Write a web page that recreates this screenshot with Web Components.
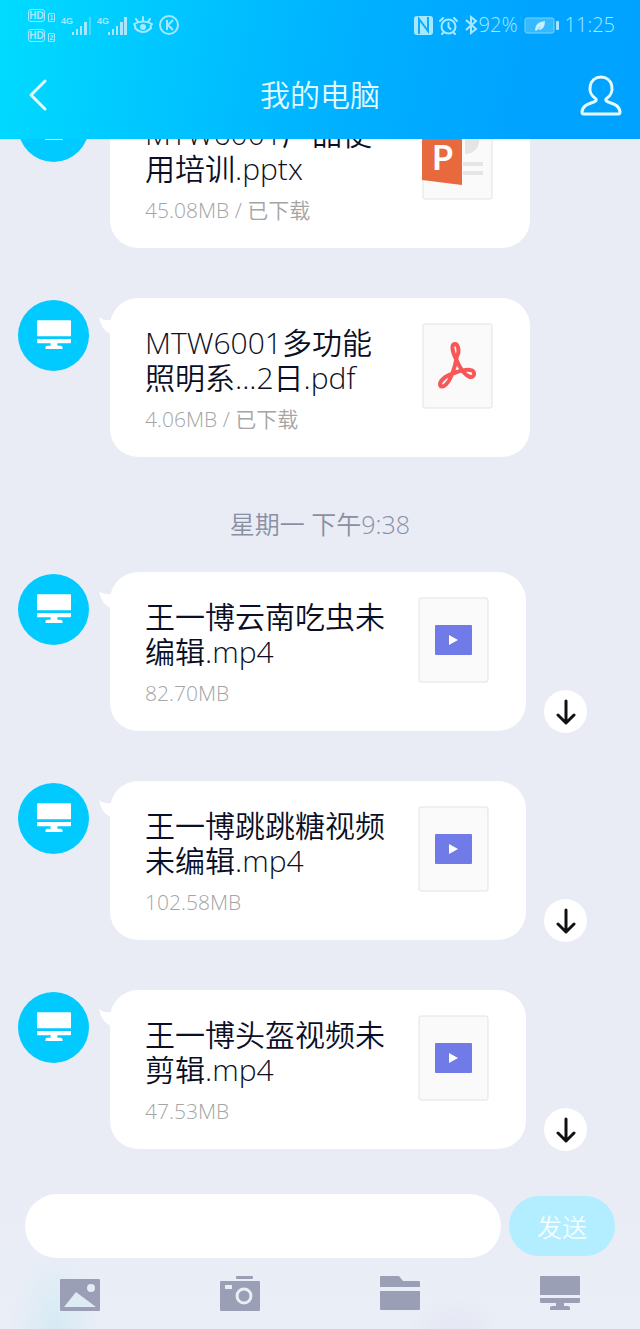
<!DOCTYPE html>
<html lang="zh-CN">
<head>
<meta charset="utf-8">
<meta name="viewport" content="width=device-width, initial-scale=1">
<title>我的电脑</title>
<style>
html, body { height: 100%; }
body {
  margin: 0;
  background: #e9ecf5;
  color: #0b0f26;
  font-family: "Open Sans", "Noto Sans CJK SC", sans-serif;
  font-weight: 350;
}
</style>
</head>
<body>
<chat-app>
  <status-bar slot="top" battery="92%" clock="11:25"></status-bar>
  <title-bar slot="top">我的电脑</title-bar>

  <file-message kind="ppt" size="45.08MB" state="已下载">MTW6001产品使用培训.pptx</file-message>
  <file-message kind="pdf" size="4.06MB" state="已下载">MTW6001多功能照明系...2日.pdf</file-message>
  <time-stamp>星期一 下午9:38</time-stamp>
  <file-message kind="video" size="82.70MB">王一博云南吃虫未编辑.mp4</file-message>
  <file-message kind="video" size="102.58MB">王一博跳跳糖视频未编辑.mp4</file-message>
  <file-message kind="video" size="47.53MB">王一博头盔视频未剪辑.mp4</file-message>

  <message-composer slot="bottom"></message-composer>
  <tool-bar slot="bottom"></tool-bar>
</chat-app>

<script>
function define(name, render) {
  customElements.define(name, class extends HTMLElement {
    constructor() {
      super();
      this.attachShadow({ mode: 'open' }).innerHTML = render(this);
    }
  });
}

define('chat-app', () => `
  <style>
    :host { display: flex; flex-direction: column; height: 100vh; }
    header {
      flex: none; color: #e6fbff; position: relative;
      background: linear-gradient(102deg, #00dcff 0%, #00c8ff 24%, #00b2ff 52%, #00a4ff 80%, #00a2ff 100%);
    }
    main {
      flex: 1; min-height: 0; overflow: hidden;
      display: flex; flex-direction: column; justify-content: flex-end;
    }
    footer {
      flex: none;
      background:
        radial-gradient(ellipse 44px 72px at 55px 132px, #d5ebf5, #d5ebf500),
        radial-gradient(circle at 455px 150px, #e2e5f4 0, #e2e5f400 50px),
        linear-gradient(#e9ecf5, #eaeef6);
    }
  </style>
  <header><slot name="top"></slot></header>
  <main><slot></slot></main>
  <footer><slot name="bottom"></slot></footer>`);

define('status-bar', (el) => `
  <style>
    :host {
      display: flex; align-items: center; justify-content: space-between;
      height: 50px; padding: 0 25px 0 28px; color: #a5e8ff; font-size: 20px; line-height: 24px;
    }
    div { display: flex; align-items: center; }
    svg { display: block; flex: none; }
    .left { gap: 6px; }
    .sims { flex-direction: column; gap: 7px; align-items: flex-start; }
    .sim { gap: 3px; align-items: flex-end; }
    .hd, .n { box-sizing: border-box; border: 1px solid; text-align: center; font-family: "Liberation Sans", sans-serif; font-weight: 700; }
    .hd { width: 17px; height: 13px; border-radius: 3px; font-size: 10px; line-height: 11px; }
    .n { width: 7px; height: 9px; border-radius: 1px; font-size: 7px; line-height: 7px; }
    .signal { align-items: flex-start; }
    .signal span { width: 11px; font: 700 9px/10px "Liberation Sans", sans-serif; }
    .eye { gap: 6px; }
    .right { gap: 6px; }
    .bt { gap: 1px; }
  </style>
  <div class="left">
    <div class="sims">
      <div class="sim"><span class="hd">HD</span><span class="n">1</span></div>
      <div class="sim"><span class="hd">HD</span><span class="n">2</span></div>
    </div>
    <div class="signal"><span>4G</span>
      <svg width="19" height="19" fill="currentColor"><path d="M0 16h2v3H0zM4 13h2v6H4zM8 10h2v9H8zM12 6h3v13h-3z"/><path d="M17 1h2v18h-2z" opacity=".4"/></svg></div>
    <div class="signal"><span>4G</span>
      <svg width="19" height="19" fill="currentColor"><path d="M0 16h2v3H0zM4 13h2v6H4zM8 10h2v9H8zM12 6h3v13h-3zM16 1h3v18h-3z"/></svg></div>
    <div class="eye">
      <svg width="20" height="20" fill="none" stroke="currentColor" stroke-width="2" stroke-linecap="round"><path d="M1 9Q10 4 19 9Q17 11 18 13Q10 21 2 13Q3 11 1 9M10 2v4M3 4l2 3M17 4l-2 3"/><circle cx="10" cy="12" r="3" fill="currentColor" stroke="none"/></svg>
      <svg width="20" height="20" fill="none" stroke="currentColor" stroke-width="2"><circle cx="10" cy="10" r="9"/><path d="M8 5v10M14 5l-5 5 5 5"/></svg>
    </div>
  </div>
  <div class="right">
    <svg width="19" height="19"><rect width="19" height="19" rx="3" fill="currentColor"/><path d="M5 18V3l9 12V1" fill="none" stroke="#07adff" stroke-width="2"/></svg>
    <svg width="19" height="19" fill="none" stroke="currentColor" stroke-width="2" stroke-linecap="round"><circle cx="9.5" cy="10.500" r="7"/><path d="M9.500 7v4l2 2M1 5l3-3M18 5l-3-3M5 16l-2 2M14 16l2 2"/></svg>
    <div class="bt">
      <svg width="14" height="20" fill="none" stroke="currentColor" stroke-width="2"><path d="M2 5l10 9-5 4V2l5 4L2 15"/></svg>
      <span>${el.getAttribute('battery')}</span>
    </div>
    <svg width="35" height="17"><rect x="1" y="1" width="29" height="15" rx="2" fill="#58c8ff" fill-opacity=".6" stroke="#74d5ff" stroke-width="1"/><path d="M11 13q0-8 10-9q0 9-7 9l4-5-6 6z" fill="#c8f1ff"/><rect x="32" y="4" width="3" height="9" rx="1" fill="currentColor"/></svg>
    <time>${el.getAttribute('clock')}</time>
  </div>`);

define('title-bar', () => `
  <style>
    :host { display: grid; grid-template-columns: 1fr auto 1fr; align-items: center; height: 89px; padding: 0 18px; }
    h1 { margin: 0; font-size: 30px; line-height: 40px; font-weight: inherit; }
    button { display: block; border: 0; padding: 0; background: none; color: inherit; justify-self: start; }
    button:last-child { justify-self: end; }
    svg { display: block; fill: none; stroke: currentColor; stroke-linecap: round; stroke-linejoin: round; }
  </style>
  <button aria-label="返回"><svg width="42" height="42" stroke-width="3"><path d="M27 7L13 21l14 14"/></svg></button>
  <h1><slot></slot></h1>
  <button aria-label="资料"><svg width="42" height="42" stroke-width="3"><path d="M16 25C6 19 9 3 21 3S36 19 26 25C24 30 39 27 40 38Q40 40 38 40H4Q2 40 2 38C3 27 18 30 16 25Z"/></svg></button>`);

define('time-stamp', () => `
  <style>
    :host { display: block; flex: none; margin-bottom: 30px; text-align: center; font-size: 25px; line-height: 35px; color: #8b8fa3; }
  </style>
  <slot></slot>`);

const thumbs = {
  ppt: `<g fill="#e5e5e5"><path d="M43 20h13A14 14 0 0 1 43 40zM43 4a14 14 0 0 1 14 14H43zM41 48h20v4H41zM41 57h20v4H41z"/></g>
        <path d="M0 25L40 18V71L0 66z" fill="#e8693d"/>
        <text x="10" y="56" fill="#fff" font-family="Lato, sans-serif" font-weight="700" font-size="34">P</text>`,
  pdf: `<path d="M35 33C38 28 36 21 33 21C29 21 30 28 34 36C37 43 42 52 48 54C53 55 54 47 48 47C42 46 26 51 21 56C16 61 18 65 22 63C28 60 33 45 35 33Z" fill="none" stroke="#f95656" stroke-width="4" stroke-linejoin="round"/>`,
  video: `<rect x="17" y="28" width="37" height="30" rx="1" fill="#707be8"/><path d="M31 38l9 5-9 5z" fill="#fff"/>`
};

define('file-thumb', (el) => `
  <style>
    :host { display: block; flex: none; }
    svg { display: block; }
  </style>
  <svg width="71" height="86" aria-hidden="true">
    <rect x="1" y="1" width="69" height="84" rx="2" fill="#fafafa" stroke="#e3e3e3" stroke-width="1"/>
    ${thumbs[el.getAttribute('kind')]}
  </svg>`);

const monitor = (w, h) => `<svg width="${w}" height="${h}" viewBox="0 0 40 36" fill="currentColor" aria-hidden="true"><path d="M1 0h38q1 0 1 1v18H0V1q0-1 1-1zM0 22h40v4q0 1-1 1H24v3h4q2 0 2 2v2H10v-2q0-2 2-2h4v-3H1q-1 0-1-1z"/></svg>`;

define('user-avatar', () => `
  <style>
    :host { display: grid; place-items: center; flex: none; width: 71px; height: 71px; border-radius: 50%; background: #00caff; color: #fff; }
    svg { display: block; }
  </style>
  ${monitor(34, 31)}`);

define('file-message', (el) => {
  const state = el.getAttribute('state');
  return `
  <style>
    :host { display: flex; flex: none; margin: 0 18px 50px; align-items: flex-start; }
    :host(:last-of-type) { margin-bottom: 45px; }
    user-avatar { margin: 2px 21px 0 0; }
    article {
      position: relative; box-sizing: border-box; flex: 0 1 ${state ? 420 : 416}px;
      display: flex; align-items: flex-start; gap: 30px;
      padding: 25px 37px 24px 35px; border-radius: 28px; background: #fff;
    }
    .tail { position: absolute; left: -11px; top: 19px; }
    .info { flex: 1; min-width: 0; padding-top: 2px; }
    h2 { margin: 0; font-size: 30px; line-height: 35px; font-weight: inherit; word-break: break-all; }
    p { margin: 10px 0 0; font-size: 21px; line-height: 28px; color: #a5a5a5; }
    button {
      align-self: flex-end; display: grid; place-items: center; flex: none; width: 43px; height: 43px;
      margin: 0 0 -2px 18px; padding: 0; border: 0; border-radius: 50%; background: #fff; color: #111;
    }
  </style>
  <user-avatar></user-avatar>
  <article>
    <svg class="tail" width="16" height="18" aria-hidden="true"><path d="M0 0Q5 4 12 3L16 18Q3 16 0 0z" fill="#fff"/></svg>
    <div class="info">
      <h2><slot></slot></h2>
      <p>${el.getAttribute('size')}${state ? ' / ' + state : ''}</p>
    </div>
    <file-thumb kind="${el.getAttribute('kind')}"></file-thumb>
  </article>
  ${state ? '' : `<button aria-label="下载"><svg width="20" height="26" fill="none" stroke="currentColor" stroke-width="3" stroke-linecap="round" stroke-linejoin="round"><path d="M10 2v22M2 16l8 8 8-8"/></svg></button>`}`;
});

define('message-composer', () => `
  <style>
    :host { display: flex; align-items: center; gap: 8px; padding: 0 25px; }
    input {
      flex: 1; min-width: 0; height: 64px; box-sizing: border-box; padding: 0 28px; border: 0; border-radius: 32px;
      background: #fff; font: inherit; font-size: 25px; outline: 0;
    }
    button {
      flex: none; width: 106px; height: 60px; padding: 0; border: 0; border-radius: 30px; background: #b2eeff;
      color: #f4fdff; font: inherit; font-size: 25px;
    }
  </style>
  <input type="text" aria-label="消息"><button>发送</button>`);

define('tool-bar', () => `
  <style>
    :host { display: grid; grid-template-columns: repeat(4, 1fr); padding: 16px 0 15px; color: #9a9fb6; }
    button { display: grid; place-items: center; height: 40px; padding: 0; border: 0; background: none; color: inherit; }
    svg { display: block; }
  </style>
  <button aria-label="图片"><svg width="40" height="40"><rect y="5" width="40" height="32" rx="1" fill="currentColor"/><circle cx="31" cy="14" r="4" fill="#e4edf6"/><path d="M4 33L16 18l20 15z" fill="#deebf5"/></svg></button>
  <button aria-label="拍照"><svg width="40" height="40" fill="currentColor"><rect x="16" y="2" width="17" height="3" rx="1"/><rect y="7" width="40" height="30" rx="1"/><rect x="5" y="11" width="7" height="4" fill="#eaedf6"/><circle cx="24" cy="22" r="7" fill="none" stroke="#eaedf6" stroke-width="3"/></svg></button>
  <button aria-label="文件"><svg width="40" height="40" fill="currentColor"><path d="M1 2h18l4 5h16q1 0 1 1v5H0V3q0-1 1-1zM0 17h40v18q0 1-1 1H1q-1 0-1-1z"/></svg></button>
  <button aria-label="电脑">${monitor(40, 36)}</button>`);
</script>
</body>
</html>
